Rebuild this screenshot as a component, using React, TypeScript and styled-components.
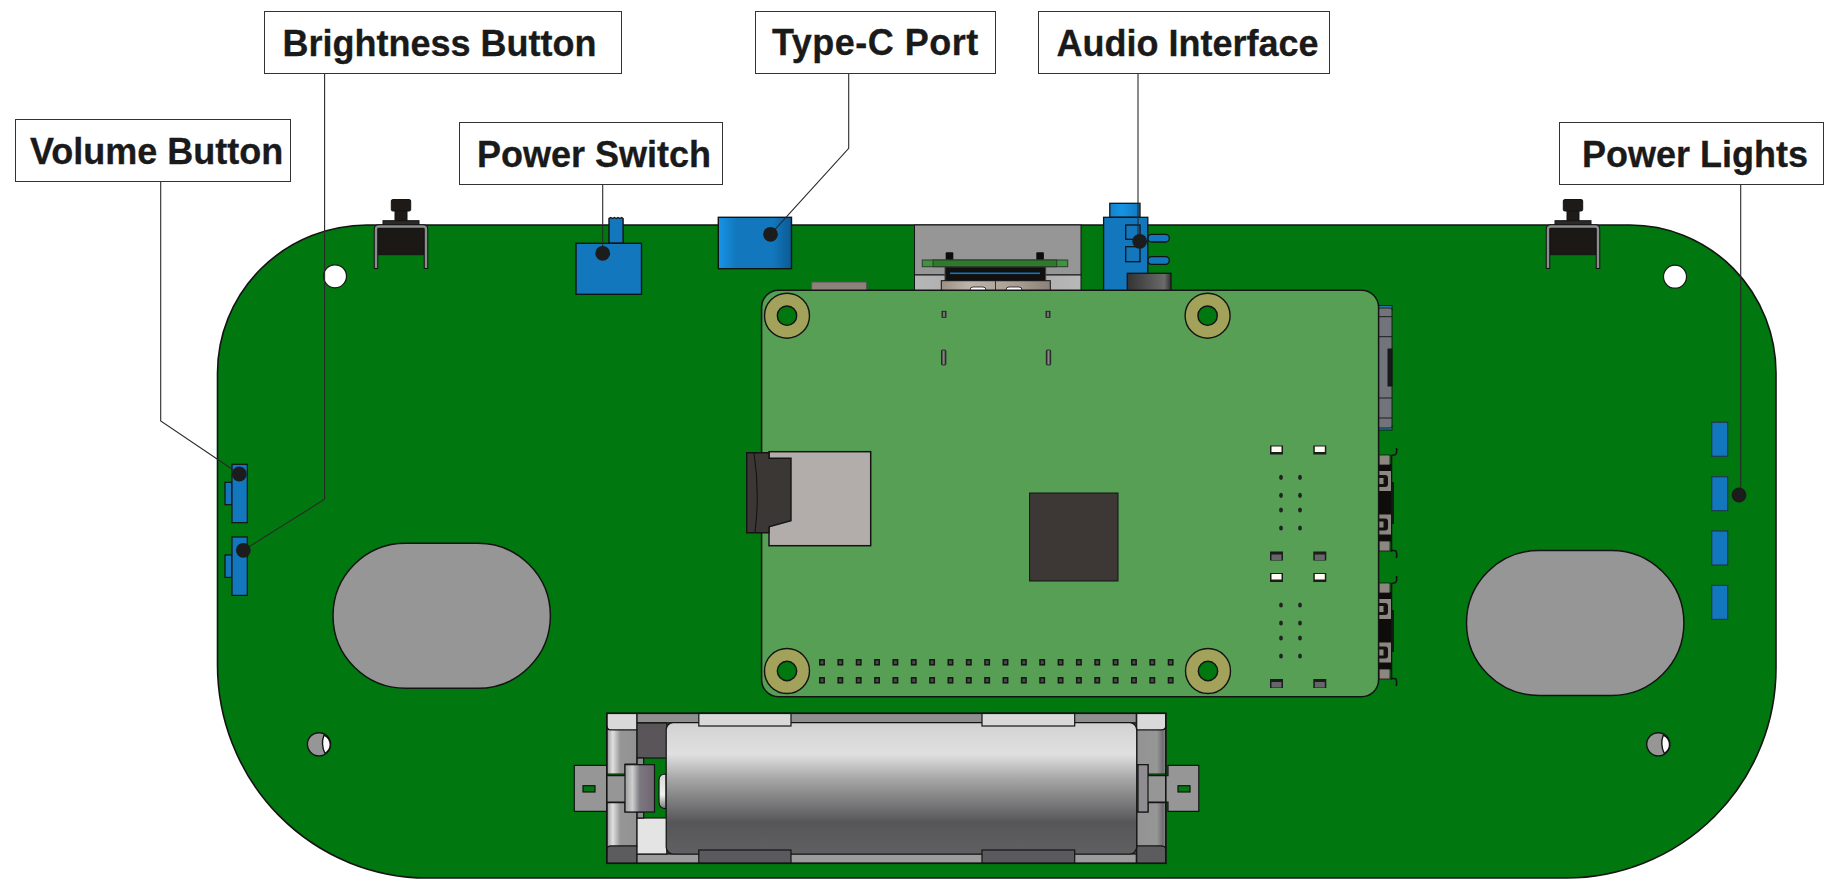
import React from 'react';
import styled, {createGlobalStyle} from 'styled-components';

const GlobalStyle = createGlobalStyle`
  html, body {
    margin: 0;
    padding: 0;
    background: #fff;
  }
`
const Canvas = styled.div`
  position: relative;
  width: 1845px;
  height: 894px;
  overflow: hidden;
  background: #fff;
  font-family: "Liberation Sans", Arial, sans-serif;
`
const Drawing = styled.svg`
  display: block;
`
const Callout = styled.div<{$x: number; $y: number; $w: number; $pad: number; $drop: number; $track: number}>`
  position: absolute;
  left: ${p => p.$x}px;
  top: ${p => p.$y}px;
  width: ${p => p.$w}px;
  height: 63px;
  box-sizing: border-box;
  display: flex;
  align-items: center;
  padding: ${p => p.$drop}px 0 0 ${p => p.$pad}px;
  border: 1.5px solid #333;
  background: #fff;
  color: #1a1a1a;
  font-size: 36px;
  font-weight: 700;
  letter-spacing: ${p => p.$track}px;
  -webkit-text-stroke: 0.3px #1a1a1a;
  white-space: nowrap;
`

const INK = '#141414'
const GREEN = '#01770f'
const BLUE = '#1277bd'
const GREY = '#969696'

const labels = [
  {text: 'Brightness Button', x: 263.5, y: 11, w: 358, pad: 18, drop: 2, track: 0},
  {text: 'Volume Button', x: 15, y: 119, w: 275.5, pad: 14, drop: 2, track: 0},
  {text: 'Power Switch', x: 459, y: 122, w: 264, pad: 17, drop: 2, track: 0},
  {text: 'Type-C Port', x: 755, y: 11, w: 241, pad: 16, drop: 0, track: 0.5},
  {text: 'Audio Interface', x: 1037.5, y: 11, w: 292.5, pad: 18, drop: 2, track: 0},
  {text: 'Power Lights', x: 1559, y: 122, w: 264.5, pad: 22, drop: 2, track: 0},
]

const leaders = [
  {points: '324.6,73 324.6,499.3 243.3,550.3', dot: [243.3, 550.3]},
  {points: '160.7,181 160.7,421 239.3,474', dot: [239.3, 474]},
  {points: '602.7,184 602.7,253.3', dot: [602.7, 253.3]},
  {points: '848.7,73 848.7,148.3 770.5,234.3', dot: [770.5, 234.3]},
  {points: '1138,73 1138,241.3', dot: [1139.7, 241.3]},
  {points: '1740.7,185 1740.7,495', dot: [1739, 495]},
]

const TactSwitch = ({x}: {x: number}) => (
  <g stroke={INK} strokeWidth={1}>
    <rect x={x - 9.7} y={199.5} width={19.4} height={11.5} rx={1.5} fill="#1d1a18" />
    <rect x={x - 6} y={211} width={12} height={10} fill="#1d1a18" />
    <rect x={x - 18} y={220.7} width={36} height={4.5} fill="#2b2a28" />
    <rect x={x - 22.5} y={228.7} width={45} height={26} fill="#1b1815" />
    <path
      d={`M${x - 25} 269 V229 Q${x - 25} 226.5 ${x - 22} 226.5 H${x + 22} Q${x + 25} 226.5 ${x + 25} 229 V269`}
      fill="none"
      stroke="#141414"
      strokeWidth={4.5}
    />
    <path
      d={`M${x - 25} 268 V229 Q${x - 25} 226.5 ${x - 22} 226.5 H${x + 22} Q${x + 25} 226.5 ${x + 25} 229 V268`}
      fill="none"
      stroke="#8d8d8d"
      strokeWidth={2.4}
    />
  </g>
)

const Standoff = ({x, y}: {x: number; y: number}) => (
  <g stroke={INK} strokeWidth={1.4}>
    <circle cx={x} cy={y} r={22.5} fill="#a3a25a" />
    <circle cx={x} cy={y} r={9.7} fill={GREEN} />
  </g>
)

const Mount = ({x}: {x: number}) => (
  <g stroke={INK} strokeWidth={1.4}>
    <circle cx={x} cy={744.3} r={11.6} fill={GREY} />
    <path d={`M${x + 5} 735 Q${x + 1.5} 744.3 ${x + 6} 753.5 Q${x + 11.5} 750 ${x + 11.2} 744.3 Q${x + 11} 738 ${x + 5} 735Z`} fill="#fff" />
  </g>
)

const SideButton = ({y}: {y: number}) => (
  <g fill={BLUE} stroke={INK} strokeWidth={1.2}>
    <rect x={225} y={y + 18} width={7} height={22.4} />
    <rect x={232} y={y} width={15.3} height={58.4} />
  </g>
)

const Pad = ({x, y, lit}: {x: number; y: number; lit: 0 | 1}) => (
  <g>
    <rect x={x} y={y} width={13} height={9} fill="#1c1c1c" />
    <rect x={x + 1.5} y={lit ? y + 1 : y + 3} width={10} height={5.5} fill={lit ? '#fffdf2' : '#66666a'} />
  </g>
)

const UsbPort = ({y}: {y: number}) => (
  <g>
    <rect x={1379} y={y + 10} width={12} height={78} fill="#0f0c0c" />
    <path d={`M1391.6 ${y + 1} V${y + 98}`} stroke={INK} strokeWidth={1.4} />
    <path d={`M1393 ${y + 28} V${y + 70}`} stroke={INK} strokeWidth={1.8} />
    <rect x={1379} y={y + 1} width={11} height={10} fill="#8c8781" stroke={INK} strokeWidth={0.8} />
    <rect x={1379} y={y + 87} width={11} height={10} fill="#8c8781" stroke={INK} strokeWidth={0.8} />
    <rect x={1379} y={y + 17} width={12} height={20} fill="#8c8781" />
    <rect x={1379} y={y + 60.5} width={12} height={20} fill="#8c8781" />
    <path d={`M1379 ${y + 21} H1385 Q1388 ${y + 21} 1388 ${y + 24} V${y + 30} Q1388 ${y + 33} 1385 ${y + 33} H1379Z`} fill="#131010" />
    <rect x={1379} y={y + 24} width={4.5} height={6} fill="#8c8781" />
    <path d={`M1379 ${y + 64.5} H1385 Q1388 ${y + 64.5} 1388 ${y + 67.5} V${y + 73.5} Q1388 ${y + 76.5} 1385 ${y + 76.5} H1379Z`} fill="#131010" />
    <rect x={1379} y={y + 67.5} width={4.5} height={6} fill="#8c8781" />
    <path d={`M1390.5 ${y + 2} L1395.5 ${y + 0.5} Q1397.5 ${y - 2} 1396.4 ${y - 6} M1390.5 ${y + 96} L1396 ${y + 97} Q1397.2 ${y + 100} 1396.4 ${y + 104}`} fill="none" stroke={INK} strokeWidth={1.6} />
  </g>
)

const Battery = () => (
  <g stroke={INK} strokeWidth={1.2}>
    {/* outer tabs */}
    <path d="M606.8 765.3 H574.3 V811.3 H606.8 V802 H626 V775.7 H606.8Z" fill={GREY} />
    <rect x={583} y={785.7} width={12} height={6.3} fill={GREEN} />
    <path d="M1168 765.3 H1198.8 V811.3 H1168 V802 H1146 V775.7 H1168Z" fill={GREY} />
    <rect x={1178} y={785.7} width={12} height={6.3} fill={GREEN} />

    {/* frame */}
    <rect x={636.8} y={713.3} width={499.5} height={9.5} fill="#8f8f8f" />
    <rect x={636.8} y={854} width={499.5} height={9.3} fill="#9c9c9c" />
    <rect x={636.8} y={723} width={30} height={35} fill="#5a5558" />
    <rect x={636.8} y={818} width={30} height={36} fill="#e4e4e4" />
    <rect x={637} y={758} width={6.7} height={7} fill="#8a8a8a" />
    <rect x={637} y={812} width={6.7} height={6} fill="#8a8a8a" />

    {/* left post */}
    <path d="M606.8 713.3 H636.8 V730 H611 Q606.8 730 606.8 726Z" fill="#d9d9d9" />
    <path d="M606.8 726 Q606.8 730 611 730 H636.8 V764 H625 V774 H606.8Z" fill="url(#postLeft)" />
    <path d="M606.8 802.7 H625 V812 H636.8 V846 H611 Q606.8 846 606.8 850Z" fill="url(#postLeft)" />
    <path d="M606.8 850 Q606.8 846 611 846 H636.8 V863.3 H606.8Z" fill="#5c5c5e" />

    {/* right post */}
    <path d="M1136.7 713.3 H1165.8 V726 Q1165.8 730 1161 730 H1136.7Z" fill="#d9d9d9" />
    <path d="M1136.7 730 H1161 Q1165.8 730 1165.8 726 V774 H1148 V764.7 H1136.7Z" fill="url(#postRight)" />
    <path d="M1136.7 812 H1148 V802.7 H1165.8 V850 Q1165.8 846 1161 846 H1136.7Z" fill="url(#postRight)" />
    <path d="M1136.7 846 H1161 Q1165.8 846 1165.8 850 V863.3 H1136.7Z" fill="#5c5c5e" />

    {/* clips */}
    <rect x={625} y={764.7} width={29.5} height={47.3} fill="url(#clipFill)" />
    <rect x={1138} y={764.7} width={10} height={47.3} fill="#8f8c92" />

    {/* cell */}
    <path d="M666 790 V774 Q659 774 659 780 V802 Q659 808.7 666 808.7Z" fill="url(#nubFill)" />
    <rect x={666.2} y={722.7} width={470.5} height={131.3} rx={7} fill="url(#cellFill)" />

    {/* retaining tabs */}
    <rect x={698.8} y={713.3} width={92.2} height={12.7} fill="#d9d9d9" />
    <rect x={982} y={713.3} width={92.7} height={12.7} fill="#d9d9d9" />
    <rect x={698.8} y={850} width={92.2} height={13.3} fill="#5a5a5e" />
    <rect x={982} y={850} width={92.7} height={13.3} fill="#5a5a5e" />

    <rect x={606.8} y={713.3} width={559} height={150} fill="none" strokeWidth={1.6} />
  </g>
)

const gpioColumns = Array.from({length: 20}, (_, i) => 822 + i * 18.35)
const dotRows = [477.3, 495.3, 510, 528, 605, 623, 638, 656]

const Board = () => (
  <Drawing width={1845} height={894} viewBox="0 0 1845 894">
    <defs>
      <linearGradient id="cellFill" x1="0" y1="0" x2="0" y2="1">
        <stop offset="0" stopColor="#d2d2d2" />
        <stop offset="0.24" stopColor="#e0e0e0" />
        <stop offset="0.43" stopColor="#a6a6a6" />
        <stop offset="0.76" stopColor="#565658" />
        <stop offset="1" stopColor="#615f62" />
      </linearGradient>
      <linearGradient id="typeCFill" x1="0" y1="0" x2="1" y2="0">
        <stop offset="0" stopColor="#1794e6" />
        <stop offset="0.25" stopColor="#1277bd" />
        <stop offset="0.75" stopColor="#1277bd" />
        <stop offset="1" stopColor="#0b5a92" />
      </linearGradient>
      <linearGradient id="audioFill" x1="0" y1="0" x2="1" y2="0">
        <stop offset="0" stopColor="#1282cc" />
        <stop offset="0.4" stopColor="#1593e4" />
        <stop offset="1" stopColor="#1278c0" />
      </linearGradient>
      <linearGradient id="jackFill" x1="0" y1="0" x2="1" y2="0">
        <stop offset="0" stopColor="#333" />
        <stop offset="0.6" stopColor="#5a5a5a" />
        <stop offset="0.85" stopColor="#6a6a6a" />
        <stop offset="1" stopColor="#2e2e2e" />
      </linearGradient>
      <linearGradient id="postLeft" x1="0" y1="0" x2="1" y2="0">
        <stop offset="0" stopColor="#9a9a9a" />
        <stop offset="0.2" stopColor="#e0e0e0" />
        <stop offset="0.45" stopColor="#969696" />
        <stop offset="1" stopColor="#929292" />
      </linearGradient>
      <linearGradient id="postRight" x1="0" y1="0" x2="1" y2="0">
        <stop offset="0" stopColor="#939393" />
        <stop offset="0.7" stopColor="#969696" />
        <stop offset="0.9" stopColor="#6f6c72" />
        <stop offset="1" stopColor="#8c8c8c" />
      </linearGradient>
      <linearGradient id="clipFill" x1="0" y1="0" x2="1" y2="0">
        <stop offset="0" stopColor="#9c9c9c" />
        <stop offset="0.25" stopColor="#cfcfcf" />
        <stop offset="0.5" stopColor="#7c7880" />
        <stop offset="1" stopColor="#6d6570" />
      </linearGradient>
      <linearGradient id="nubFill" x1="0" y1="0" x2="0" y2="1">
        <stop offset="0" stopColor="#d8d8d8" />
        <stop offset="0.6" stopColor="#f0f0f0" />
        <stop offset="1" stopColor="#777" />
      </linearGradient>
      <linearGradient id="stripFill" x1="0" y1="0" x2="1" y2="0">
        <stop offset="0" stopColor="#b6b6b6" />
        <stop offset="0.5" stopColor="#a7a7a7" />
        <stop offset="1" stopColor="#b8b8b8" />
      </linearGradient>
      <linearGradient id="plugFill" x1="0" y1="0" x2="1" y2="0">
        <stop offset="0" stopColor="#9c9086" />
        <stop offset="0.25" stopColor="#bcb4aa" />
        <stop offset="0.7" stopColor="#a79d93" />
        <stop offset="1" stopColor="#8c8178" />
      </linearGradient>
      <linearGradient id="pinFill" x1="0" y1="0" x2="1" y2="0">
        <stop offset="0" stopColor="#2a2a2a" />
        <stop offset="0.5" stopColor="#8a8a8a" />
        <stop offset="1" stopColor="#2a2a2a" />
      </linearGradient>
    </defs>

    <path
      d="M367 225 H1630 A146 148 0 0 1 1776 373 V668 A210 210 0 0 1 1566 878 H427 A210 213 0 0 1 217.5 665 V373 A150 148 0 0 1 367 225Z"
      fill={GREEN}
      stroke={INK}
      strokeWidth={1.6}
    />

    <TactSwitch x={401} />
    <TactSwitch x={1573} />

    <circle cx={335} cy={276.3} r={11.5} fill="#fff" stroke={INK} strokeWidth={1.2} />
    <circle cx={1675} cy={276.7} r={11.5} fill="#fff" stroke={INK} strokeWidth={1.2} />
    <Mount x={319} />
    <Mount x={1658.3} />

    <rect x={333} y={543.3} width={217.4} height={145} rx={72.5} fill={GREY} stroke={INK} strokeWidth={1.5} />
    <rect x={1466.5} y={550.5} width={217.4} height={145} rx={72.5} fill={GREY} stroke={INK} strokeWidth={1.5} />

    {/* power switch */}
    <g fill={BLUE} stroke={INK} strokeWidth={1.4}>
      <path d="M609 243.3 V218.5 l1.8 -1 1.8 1 1.8 -1 1.8 1 1.8 -1 1.8 1 1.8 -1 1.5 1 V243.3Z" />
      <rect x={576} y={243.3} width={65.5} height={51} />
    </g>

    {/* type-c */}
    <rect x={718.3} y={217.3} width={73.2} height={51.4} fill="url(#typeCFill)" stroke={INK} strokeWidth={1.4} />

    {/* display connector area */}
    <rect x={914.5} y={225} width={166.5} height={50} fill={GREY} stroke={INK} strokeWidth={1} />
    <rect x={914.5} y={275} width={166.5} height={16} fill="url(#stripFill)" stroke={INK} strokeWidth={1} />
    <rect x={945.7} y={252.3} width={7.6} height={8} rx={1} fill="#0d0d0d" />
    <rect x={1036.3} y={252.3} width={7.6} height={8} rx={1} fill="#0d0d0d" />
    <rect x={945} y={266.7} width={100.7} height={15} fill="#120f0f" stroke="#444" strokeWidth={1} />
    <rect x={950} y={272.5} width={90} height={1.6} fill={BLUE} />
    <rect x={922.3} y={260} width={145.4} height={6.7} fill="#3f9440" stroke="#2b3d2b" strokeWidth={1} />
    <rect x={933} y={260} width={123.7} height={6.7} fill="#2f7a2c" stroke="#2b3d2b" strokeWidth={1} />
    <rect x={941.3} y={280.7} width={109} height={11} fill="url(#plugFill)" stroke={INK} strokeWidth={1} />
    <path d="M995.5 280.7 V291" stroke={INK} strokeWidth={0.8} />
    <rect x={970} y={287} width={16} height={6} rx={3} fill="#fff" stroke={INK} strokeWidth={0.8} />
    <rect x={1006} y={287} width={16} height={6} rx={3} fill="#fff" stroke={INK} strokeWidth={0.8} />
    <rect x={811.6} y={282} width={54.9} height={9} fill="#8d8279" stroke="#555" strokeWidth={1} />

    {/* audio jack */}
    <g stroke={INK} strokeWidth={1.3}>
      <rect x={1109.8} y={203.3} width={30.2} height={14} fill="url(#audioFill)" />
      <rect x={1147.8} y={234.3} width={21.5} height={7.7} rx={3.8} fill={BLUE} />
      <rect x={1147.8} y={256.7} width={21.5} height={7.7} rx={3.8} fill={BLUE} />
      <rect x={1103.6} y={217.3} width={44.2} height={74} fill={BLUE} />
      <rect x={1125.7} y={225} width={14.3} height={14.3} fill="none" />
      <rect x={1125.7} y={246.7} width={14.3} height={15} fill="none" />
      <rect x={1127.3} y={273.3} width={43.7} height={18} fill="url(#jackFill)" />
    </g>

    {/* connector on the right of the pi */}
    <g stroke={INK} strokeWidth={0.9}>
      <rect x={1378} y={305.7} width={14} height={4.5} fill="#2c86c4" />
      <rect x={1378} y={425.5} width={14} height={4.5} fill="#2c86c4" />
      <rect x={1378} y={308} width={14} height={120} rx={2} fill="#71747a" />
      <path d="M1378 316.7 H1392 M1378 336.7 H1392 M1378 398 H1392 M1378 418 H1392" fill="none" />
      <rect x={1388} y={349} width={4} height={37} fill="#17191b" />
    </g>
    <UsbPort y={454} />
    <UsbPort y={582} />

    {/* pi */}
    <rect x={761.6} y={290.3} width={617} height={406.4} rx={17} fill="#569f55" stroke={INK} strokeWidth={1.5} />
    <Standoff x={787} y={315.7} />
    <Standoff x={1207.6} y={315.7} />
    <Standoff x={787} y={671} />
    <Standoff x={1208} y={671} />

    <g fill="url(#pinFill)" stroke="#1a1a1a" strokeWidth={0.8}>
      <rect x={942} y={311.3} width={4} height={6} />
      <rect x={1046} y={311.3} width={4} height={6} />
      <rect x={941.5} y={350} width={4.4} height={15} rx={1} />
      <rect x={1046.3} y={350} width={4.4} height={15} rx={1} />
    </g>

    <rect x={769} y={451.7} width={101.7} height={94} fill="#b2adaa" stroke={INK} strokeWidth={1.5} />
    <path d="M746.7 452.7 H769 V458.3 H791 V520.7 L769 526.7 V532.7 H746.7Z" fill="#3b3734" stroke={INK} strokeWidth={1.4} />
    <path d="M754 453 Q760 492 755 532" fill="none" stroke={INK} strokeWidth={1.1} />

    <rect x={1029.6} y={493} width={88.4} height={88} fill="#3d3835" stroke={INK} strokeWidth={1} />

    <g fill="#4a4a4a" stroke="#151515" strokeWidth={1.5}>
      {gpioColumns.map(x => (
        <React.Fragment key={x}>
          <rect x={x - 2.2} y={659.8} width={4.4} height={5} />
          <rect x={x - 2.2} y={677.8} width={4.4} height={5} />
        </React.Fragment>
      ))}
    </g>
    <g fill="#222">
      {dotRows.map(y => (
        <React.Fragment key={y}>
          <ellipse cx={1281} cy={y} rx={1.9} ry={2.6} />
          <ellipse cx={1300} cy={y} rx={1.9} ry={2.6} />
        </React.Fragment>
      ))}
    </g>
    {[1270, 1313.3].map(x => (
      <React.Fragment key={x}>
        <Pad x={x} y={445.5} lit={1} />
        <Pad x={x} y={551.5} lit={0} />
        <Pad x={x} y={573} lit={1} />
        <Pad x={x} y={679} lit={0} />
      </React.Fragment>
    ))}

    <SideButton y={464.3} />
    <SideButton y={537} />

    {[422.3, 476.7, 531, 585.4].map(y => (
      <rect key={y} x={1711.7} y={y} width={16} height={34} fill={BLUE} stroke="#1d3b4f" strokeWidth={1.2} />
    ))}

    <Battery />

    {leaders.map(l => (
      <g key={l.points}>
        <polyline points={l.points} fill="none" stroke="#2a2a2a" strokeWidth={1.1} />
        <circle cx={l.dot[0]} cy={l.dot[1]} r={7.4} fill="#1c1c1c" />
      </g>
    ))}
  </Drawing>
)

const App: React.FC = () => (
  <Canvas>
    <GlobalStyle />
    <Board />
    {labels.map(l => (
      <Callout key={l.text} $x={l.x} $y={l.y} $w={l.w} $pad={l.pad} $drop={l.drop} $track={l.track}>
        {l.text}
      </Callout>
    ))}
  </Canvas>
)

export default App
